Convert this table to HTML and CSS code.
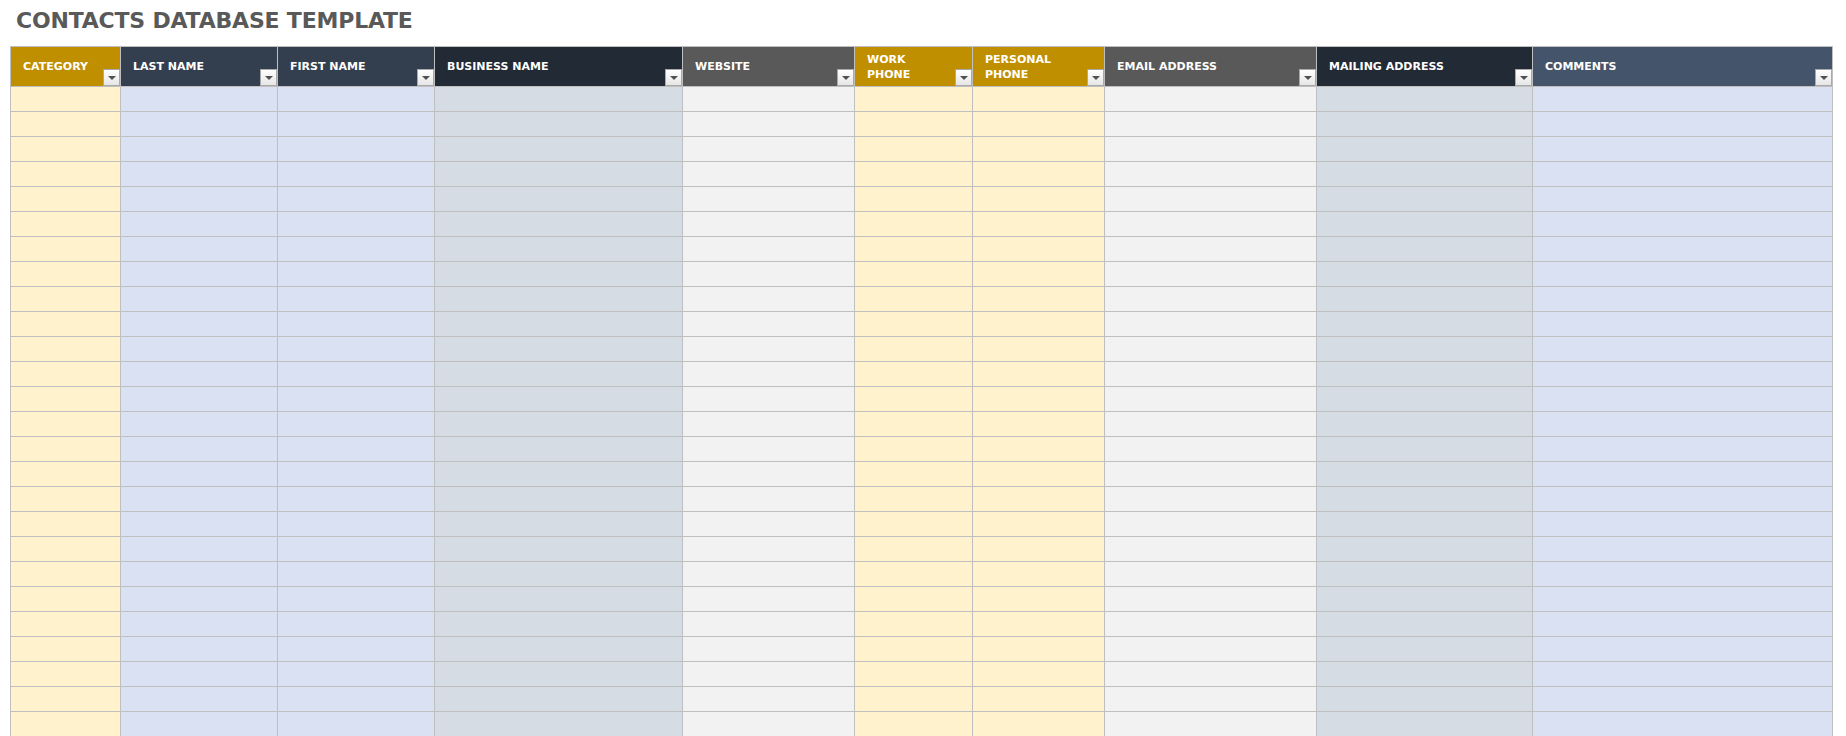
FILE: index.html
```html
<!DOCTYPE html>
<html>
<head>
<meta charset="utf-8">
<link rel="stylesheet" href="styles.css">
</head>
<body>
<h1 class="title">CONTACTS DATABASE TEMPLATE</h1>
<table class="sheet">
<colgroup>
<col class="w-cat b-yel"><col class="w-name b-blue"><col class="w-name b-blue"><col class="w-biz b-slate"><col class="w-web b-grey"><col class="w-work b-yel"><col class="w-pers b-yel"><col class="w-email b-grey"><col class="w-mail b-slate"><col class="w-com b-blue">
</colgroup>
<thead>
<tr>
<th class="h-gold"><div class="hcell"><span class="lbl">CATEGORY</span><span class="dd"></span></div></th>
<th class="h-navy"><div class="hcell"><span class="lbl">LAST NAME</span><span class="dd"></span></div></th>
<th class="h-navy"><div class="hcell"><span class="lbl">FIRST NAME</span><span class="dd"></span></div></th>
<th class="h-ink"><div class="hcell"><span class="lbl">BUSINESS NAME</span><span class="dd"></span></div></th>
<th class="h-grey"><div class="hcell"><span class="lbl">WEBSITE</span><span class="dd"></span></div></th>
<th class="h-gold"><div class="hcell"><span class="lbl">WORK<br>PHONE</span><span class="dd"></span></div></th>
<th class="h-gold"><div class="hcell"><span class="lbl">PERSONAL<br>PHONE</span><span class="dd"></span></div></th>
<th class="h-grey"><div class="hcell"><span class="lbl">EMAIL ADDRESS</span><span class="dd"></span></div></th>
<th class="h-ink"><div class="hcell"><span class="lbl">MAILING ADDRESS</span><span class="dd"></span></div></th>
<th class="h-steel"><div class="hcell"><span class="lbl">COMMENTS</span><span class="dd"></span></div></th>
</tr>
</thead>
<tbody>
<tr><td></td><td></td><td></td><td></td><td></td><td></td><td></td><td></td><td></td><td></td></tr>
<tr><td></td><td></td><td></td><td></td><td></td><td></td><td></td><td></td><td></td><td></td></tr>
<tr><td></td><td></td><td></td><td></td><td></td><td></td><td></td><td></td><td></td><td></td></tr>
<tr><td></td><td></td><td></td><td></td><td></td><td></td><td></td><td></td><td></td><td></td></tr>
<tr><td></td><td></td><td></td><td></td><td></td><td></td><td></td><td></td><td></td><td></td></tr>
<tr><td></td><td></td><td></td><td></td><td></td><td></td><td></td><td></td><td></td><td></td></tr>
<tr><td></td><td></td><td></td><td></td><td></td><td></td><td></td><td></td><td></td><td></td></tr>
<tr><td></td><td></td><td></td><td></td><td></td><td></td><td></td><td></td><td></td><td></td></tr>
<tr><td></td><td></td><td></td><td></td><td></td><td></td><td></td><td></td><td></td><td></td></tr>
<tr><td></td><td></td><td></td><td></td><td></td><td></td><td></td><td></td><td></td><td></td></tr>
<tr><td></td><td></td><td></td><td></td><td></td><td></td><td></td><td></td><td></td><td></td></tr>
<tr><td></td><td></td><td></td><td></td><td></td><td></td><td></td><td></td><td></td><td></td></tr>
<tr><td></td><td></td><td></td><td></td><td></td><td></td><td></td><td></td><td></td><td></td></tr>
<tr><td></td><td></td><td></td><td></td><td></td><td></td><td></td><td></td><td></td><td></td></tr>
<tr><td></td><td></td><td></td><td></td><td></td><td></td><td></td><td></td><td></td><td></td></tr>
<tr><td></td><td></td><td></td><td></td><td></td><td></td><td></td><td></td><td></td><td></td></tr>
<tr><td></td><td></td><td></td><td></td><td></td><td></td><td></td><td></td><td></td><td></td></tr>
<tr><td></td><td></td><td></td><td></td><td></td><td></td><td></td><td></td><td></td><td></td></tr>
<tr><td></td><td></td><td></td><td></td><td></td><td></td><td></td><td></td><td></td><td></td></tr>
<tr><td></td><td></td><td></td><td></td><td></td><td></td><td></td><td></td><td></td><td></td></tr>
<tr><td></td><td></td><td></td><td></td><td></td><td></td><td></td><td></td><td></td><td></td></tr>
<tr><td></td><td></td><td></td><td></td><td></td><td></td><td></td><td></td><td></td><td></td></tr>
<tr><td></td><td></td><td></td><td></td><td></td><td></td><td></td><td></td><td></td><td></td></tr>
<tr><td></td><td></td><td></td><td></td><td></td><td></td><td></td><td></td><td></td><td></td></tr>
<tr><td></td><td></td><td></td><td></td><td></td><td></td><td></td><td></td><td></td><td></td></tr>
<tr><td></td><td></td><td></td><td></td><td></td><td></td><td></td><td></td><td></td><td></td></tr>
<tr><td></td><td></td><td></td><td></td><td></td><td></td><td></td><td></td><td></td><td></td></tr>
</tbody>
</table>
</body>
</html>
```

FILE: styles.css
```css
html, body {
  margin: 0;
  padding: 0;
  overflow: hidden;
  background: #ffffff;
}
body {
  font-family: "DejaVu Sans", "Liberation Sans", sans-serif;
}
.title {
  margin: 0;
  height: 46px;
  box-sizing: border-box;
  padding: 8px 0 0 16px;
  font-size: 22px;
  line-height: 26px;
  font-weight: bold;
  color: #595959;
  letter-spacing: -0.2px;
}
.sheet {
  margin-left: 10px;
  border-collapse: collapse;
  table-layout: fixed;
  width: 1823px;
}
.sheet th, .sheet td {
  border: 1px solid #bfbfbf;
  padding: 0;
}
.sheet td {
  height: 24px;
}
.w-cat { width: 110px; }
.w-name { width: 157px; }
.w-biz { width: 248px; }
.w-web { width: 172px; }
.w-work { width: 118px; }
.w-pers { width: 132px; }
.w-email { width: 212px; }
.w-mail { width: 216px; }
.w-com { width: 300px; }
.b-yel { background: #fff2cc; }
.b-blue { background: #d9e1f2; }
.b-slate { background: #d6dce4; }
.b-grey { background: #f2f2f2; }
.h-gold { background: #bf8f00; }
.h-navy { background: #333f4f; }
.h-ink { background: #222b35; }
.h-grey { background: #595959; }
.h-steel { background: #44546a; }
.hcell {
  height: 39px;
  display: flex;
  text-align: left;
}
.lbl {
  align-self: center;
  padding-left: 12px;
  color: #ffffff;
  font-size: 11px;
  line-height: 15px;
  font-weight: bold;
  white-space: nowrap;
}
.dd {
  margin-left: auto;
  align-self: flex-end;
  width: 17px;
  height: 17px;
  box-sizing: border-box;
  border: 1px solid #a9a9a9;
  background: linear-gradient(#ffffff, #e6e6e6);
  display: flex;
  align-items: center;
  justify-content: center;
}
.dd::after {
  content: "";
  width: 0;
  height: 0;
  border-left: 4px solid transparent;
  border-right: 4px solid transparent;
  border-top: 4px solid #505050;
  margin-top: 1px;
}
```
